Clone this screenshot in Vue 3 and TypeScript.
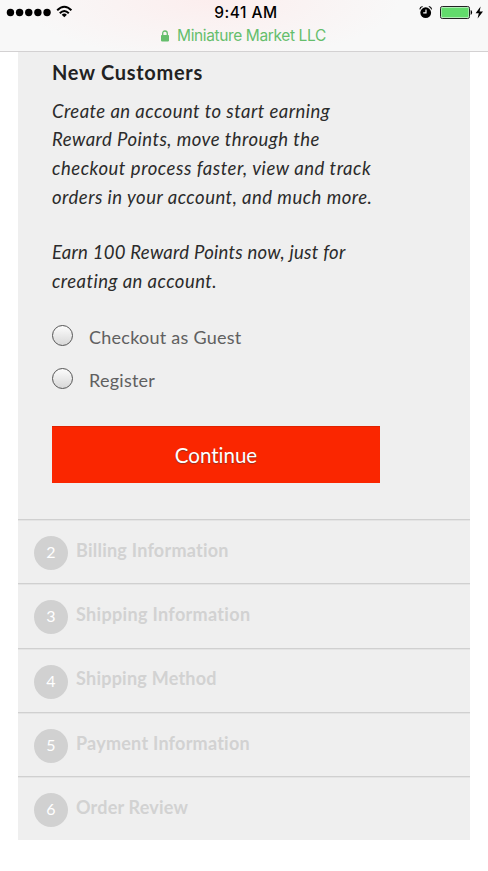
<script setup lang="ts">
interface Line { text: string; cls: string }
interface Step { num: number; title: string; cls: string }

const intro: Line[] = [
  { text: 'Create an account to start earning', cls: 'l1' },
  { text: 'Reward Points, move through the', cls: 'l2' },
  { text: 'checkout process faster, view and track', cls: 'l3' },
  { text: 'orders in your account, and much more.', cls: 'l4' },
]
const bonus: Line[] = [
  { text: 'Earn 100 Reward Points now, just for', cls: 'l5' },
  { text: 'creating an account.', cls: 'l6' },
]
const options: Line[] = [
  { text: 'Checkout as Guest', cls: 'guest' },
  { text: 'Register', cls: 'register' },
]
const steps: Step[] = [
  { num: 2, title: 'Billing Information', cls: 's2' },
  { num: 3, title: 'Shipping Information', cls: 's3' },
  { num: 4, title: 'Shipping Method', cls: 's4' },
  { num: 5, title: 'Payment Information', cls: 's5' },
  { num: 6, title: 'Order Review', cls: 's6' },
]
</script>

<template>
  <div class="screen">
    <header class="chrome">
      <div class="status">
        <div class="side">
          <svg width="76" height="18" viewBox="0 0 76 18">
            <circle v-for="i in 5" :key="i" :cx="1.3 + i * 9.15" cy="8.5" r="3.7" />
            <g transform="translate(64.3 0)" fill="none" stroke="#000" stroke-width="2">
              <path d="M-7.1 6.3Q0 -0.9 7.1 6.3" />
              <path d="M-4.5 9.3Q0 4.7 4.5 9.3" />
              <path d="M0 13.2L-2.6 10.7Q0 8.5 2.6 10.7Z" fill="#000" stroke="none" />
            </g>
          </svg>
        </div>
        <span class="time">9:41 AM</span>
        <div class="side right">
          <svg width="70" height="18" viewBox="0 0 70 18">
            <circle cx="7.7" cy="8.7" r="5.4" />
            <path d="M1.8 5.3Q2.2 2.8 4.6 2.5M10.8 2.5Q13.2 2.8 13.6 5.3" fill="none" stroke="#000" stroke-width="1.1" />
            <path d="M8 5.5V8.8H5.2" fill="none" stroke="#fff" stroke-width="1.2" />
            <rect x="22.5" y="2.5" width="29" height="12" rx="1.8" fill="#fff" stroke="#222" />
            <rect x="23.4" y="3.4" width="27.2" height="10.2" rx="0.8" fill="#62db6c" />
            <path d="M52.7 6.1Q54.1 6.5 54.1 8.5T52.7 10.9Z" />
            <path d="M62.6 2.6L57.6 9.3H60.8L59.6 14.4L65 7.5H61.6Z" />
          </svg>
        </div>
      </div>
      <div class="address">
        <svg width="8" height="12" viewBox="0 0 8 12">
          <path d="M1.7 6V3.5Q1.7 1 4 1T6.3 3.5V6" fill="none" stroke="#65be6c" stroke-width="1.3" />
          <rect x="0" y="5" width="8" height="6.4" rx="0.8" fill="#65be6c" />
        </svg>
        <span>Miniature Market LLC</span>
      </div>
    </header>

    <main class="card">
      <section class="customers">
        <h2>New Customers</h2>
        <p class="copy"><span v-for="l in intro" :key="l.cls" :class="l.cls">{{ l.text }}</span></p>
        <p class="copy bonus"><span v-for="l in bonus" :key="l.cls" :class="l.cls">{{ l.text }}</span></p>
        <div class="options">
          <label v-for="o in options" :key="o.cls" class="option">
            <input type="radio" name="method" :value="o.cls" />
            <span :class="o.cls">{{ o.text }}</span>
          </label>
        </div>
        <button type="button" class="continue">Continue</button>
      </section>
      <section v-for="s in steps" :key="s.num" class="step">
        <span class="num">{{ s.num }}</span>
        <h3 :class="s.cls">{{ s.title }}</h3>
      </section>
    </main>
  </div>
</template>

<style>
body { margin: 0; background: #fff; }
</style>

<style scoped>
.screen { width: 488px; height: 871px; overflow: hidden; background: #fff; font-family: Lato, sans-serif; font-variant-ligatures: none; white-space: nowrap; }
.chrome { box-sizing: border-box; height: 52px; padding-top: 4px; border-bottom: 1px solid #d3d1d2; background: radial-gradient(ellipse 190px 60px at 210px 0, #fceeee, #f8f8f8); font-family: Inter, sans-serif; }
.status { display: grid; grid-template-columns: 1fr auto 1fr; height: 18px; align-items: center; }
.side { display: flex; }
.right { justify-content: flex-end; }
.time { font-size: 15.5px; font-weight: 500; line-height: 18px; letter-spacing: 0.5px; padding-left: 4px; }
.address { display: flex; align-items: center; justify-content: center; gap: 8px; height: 27px; padding-right: 1px; color: #65be6c; font-size: 15.5px; line-height: 27px; letter-spacing: -0.38px; }
.card { box-sizing: border-box; width: 452px; height: 788px; margin-left: 18px; background: #efefef; }
.customers { box-sizing: border-box; height: 467.3px; padding: 8px 34px 0; }
h2 { margin: 0; font-size: 20px; line-height: 24px; letter-spacing: 0.7px; color: #222; }
.copy { display: flex; flex-direction: column; align-items: flex-start; margin: 12.5px 0 0; font-size: 18.5px; line-height: 28.8px; font-style: italic; color: #2b2b2b; }
.bonus { margin-top: 26.3px; }
.l1 { letter-spacing: 0.45px; }
.l2 { letter-spacing: 0.47px; }
.l3 { letter-spacing: 0.54px; }
.l4 { letter-spacing: 0.48px; }
.l5 { letter-spacing: 0.26px; }
.l6 { letter-spacing: 0.45px; }
.guest, .register { letter-spacing: 0.25px; }
.options { display: flex; flex-direction: column; gap: 19.2px; margin-top: 27.5px; }
.option { display: flex; align-items: flex-start; gap: 16px; height: 24px; color: #606060; font-size: 18px; line-height: 29px; }
input { appearance: none; box-sizing: border-box; width: 21px; height: 21px; margin: 2px 0 0; border: 1.5px solid #555; border-radius: 50%; background: linear-gradient(#fcfcfc, #d8d8d8); }
.continue { display: block; width: 328px; height: 57px; margin: 35.5px 0 0; padding: 0; border: 0; border-top: 1px solid #e02200; background: #fa2600; color: #fff; font: 20.5px/56px Lato, sans-serif; font-variant-ligatures: none; text-shadow: 0 1px 1px #903020; }
.step { box-sizing: border-box; display: flex; gap: 8px; height: 64.2px; padding: 15.7px 16px 0; border-top: 1px solid #d0d0d0; box-shadow: inset 0 1px #e4e4e4; }
.num { width: 34px; height: 34px; margin-top: 0.3px; border-radius: 50%; background: #d1d1d1; color: #fff; font-size: 16px; line-height: 32px; text-align: center; }
h3 { margin: 0; font-size: 18px; line-height: 28px; letter-spacing: 0.24px; color: #d2d2d2; }
.s3 { letter-spacing: 0.33px; }
.s6 { letter-spacing: 0.2px; }
</style>
